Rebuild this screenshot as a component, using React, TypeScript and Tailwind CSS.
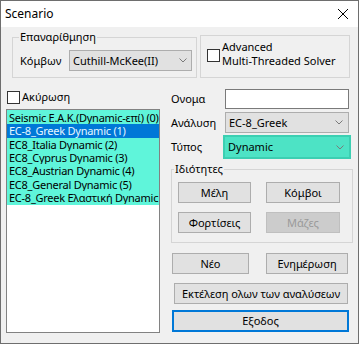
import React from "react";

function Chevron() {
  return (
    <svg width="8" height="5" viewBox="0 0 8 5" className="shrink-0">
      <path d="M0.5 0.5 L4 4 L7.5 0.5" fill="none" stroke="#7a7a7a" strokeWidth="1" />
    </svg>
  );
}

function CheckBox() {
  return <div className="w-[13px] h-[13px] bg-white border border-[#333333] shrink-0" />;
}

function Btn({ label, className }: { label: string; className: string }) {
  return (
    <div
      className={
        "h-[21px] flex items-center justify-center bg-[#e1e1e1] border border-[#adadad] shrink-0 whitespace-nowrap " +
        className
      }
    >
      {label}
    </div>
  );
}

const items = [
  "Seismic E.A.K.(Dynamic-επί) (0)",
  "EC-8_Greek Dynamic (1)",
  "EC8_Italia Dynamic (2)",
  "EC8_Cyprus Dynamic (3)",
  "EC8_Austrian Dynamic (4)",
  "EC8_General Dynamic (5)",
  "EC-8_Greek Ελαστική Dynamic",
];

export default function App() {
  return (
    <div className="w-[359px] h-[344px] bg-[#f0f0f0] border border-[#6e6e6e] flex flex-col text-[11px] leading-[16px] text-black font-['Noto_Sans',sans-serif] overflow-hidden">
      {/* title bar */}
      <div className="h-[26px] bg-white flex items-center justify-between shrink-0 text-[12px]">
        <span className="pl-[4px]">Scenario</span>
        <svg width="10" height="10" viewBox="0 0 10 10" className="mr-[10px]">
          <path d="M0 0 L10 10 M10 0 L0 10" stroke="#000" strokeWidth="1" />
        </svg>
      </div>

      {/* top row */}
      <div className="flex items-start mt-[2px] ml-[11px]">
        <fieldset className="w-[185px] h-[49px] border border-[#d5d5d5] m-0 p-0 min-w-0">
          <legend className="ml-[6px] px-[1px] leading-[16px]">Επαναρίθμηση</legend>
          <div className="flex items-center mt-[5px]">
            <span className="w-[56px] pl-[7px] shrink-0">Κόμβων</span>
            <div className="w-[123px] h-[21px] bg-[#e1e1e1] border border-[#adadad] flex items-center justify-between pl-[3px] pr-[4px]">
              <span>Cuthill-McKee(II)</span>
              <Chevron />
            </div>
          </div>
        </fieldset>
        <div className="w-[150px] h-[43px] mt-[6px] ml-[3px] border border-[#d5d5d5] flex items-start pl-[6px] pt-[4px]">
          <div className="mt-[9px]">
            <CheckBox />
          </div>
          <div className="ml-[2px] leading-[14px]">
            <div>Advanced</div>
            <div>Multi-Threaded Solver</div>
          </div>
        </div>
      </div>

      {/* middle */}
      <div className="flex items-start mt-[7px]">
        {/* left column */}
        <div className="ml-[5px] w-[154px] flex flex-col">
          <div className="h-[24px] flex items-center pl-[1px]">
            <CheckBox />
            <span className="ml-[2px]">Ακύρωση</span>
          </div>
          <div className="w-[154px] h-[224px] bg-white border border-[#828282] overflow-hidden">
            <div className="bg-[#5ff5da] pt-[1px] pb-[1px]">
              {items.map((t, i) => (
                <div
                  key={i}
                  className={
                    "h-[13.33px] leading-[13.33px] pl-[2px] tracking-[-0.25px] whitespace-nowrap overflow-hidden " +
                    (i === 1 ? "bg-[#0078d7] text-[#e6f6ff]" : "")
                  }
                >
                  {t}
                </div>
              ))}
            </div>
          </div>
        </div>

        {/* right column */}
        <div className="ml-[11px] w-[182px] flex flex-col pt-[4px]">
          <div className="flex items-center">
            <span className="w-[54px] shrink-0">Ονομα</span>
            <div className="w-[124px] h-[20px] bg-white border border-[#7a7a7a]" />
          </div>
          <div className="flex items-center mt-[3px]">
            <span className="w-[54px] shrink-0">Ανάλυση</span>
            <div className="w-[124px] h-[21px] bg-[#e1e1e1] border border-[#adadad] flex items-center justify-between pl-[3px] pr-[5px]">
              <span>EC-8_Greek</span>
              <Chevron />
            </div>
          </div>
          <div className="flex items-center mt-[2px]">
            <span className="w-[52px] shrink-0">Τύπος</span>
            <div className="w-[128px] h-[24px] bg-[#4de3c5] border-2 border-[#3ccfb2] flex items-center justify-between pl-[3px] pr-[5px]">
              <span>Dynamic</span>
              <Chevron />
            </div>
          </div>

          <fieldset className="w-[182px] h-[82px] mt-[2px] border border-[#d5d5d5] m-0 p-0 min-w-0">
            <legend className="ml-[2px] px-[1px] leading-[16px]">Ιδιότητες</legend>
            <div className="flex mt-[5px] pl-[6px]">
              <Btn label="Μέλη" className="w-[73px]" />
              <Btn label="Κόμβοι" className="w-[74px] ml-[15px]" />
            </div>
            <div className="flex mt-[9px] pl-[6px]">
              <Btn label="Φορτίσεις" className="w-[73px]" />
              <div className="w-[74px] ml-[15px] h-[21px] flex items-center justify-center bg-[#cccccc] border border-[#bfbfbf] text-[#9a9a9a]">
                Μάζες
              </div>
            </div>
          </fieldset>

          <div className="flex mt-[10px]">
            <Btn label="Νέο" className="w-[77px] ml-[1px]" />
            <Btn label="Ενημέρωση" className="w-[82px] ml-[17px]" />
          </div>
          <Btn label="Εκτέλεση ολων των αναλύσεων" className="w-[174px] ml-[3px] mt-[9px]" />
          <div className="w-[177px] h-[22px] ml-[1px] mt-[6px] flex items-center justify-center bg-[#e1e1e1] border-2 border-[#0078d7]">
            Εξοδος
          </div>
        </div>
      </div>
    </div>
  );
}
